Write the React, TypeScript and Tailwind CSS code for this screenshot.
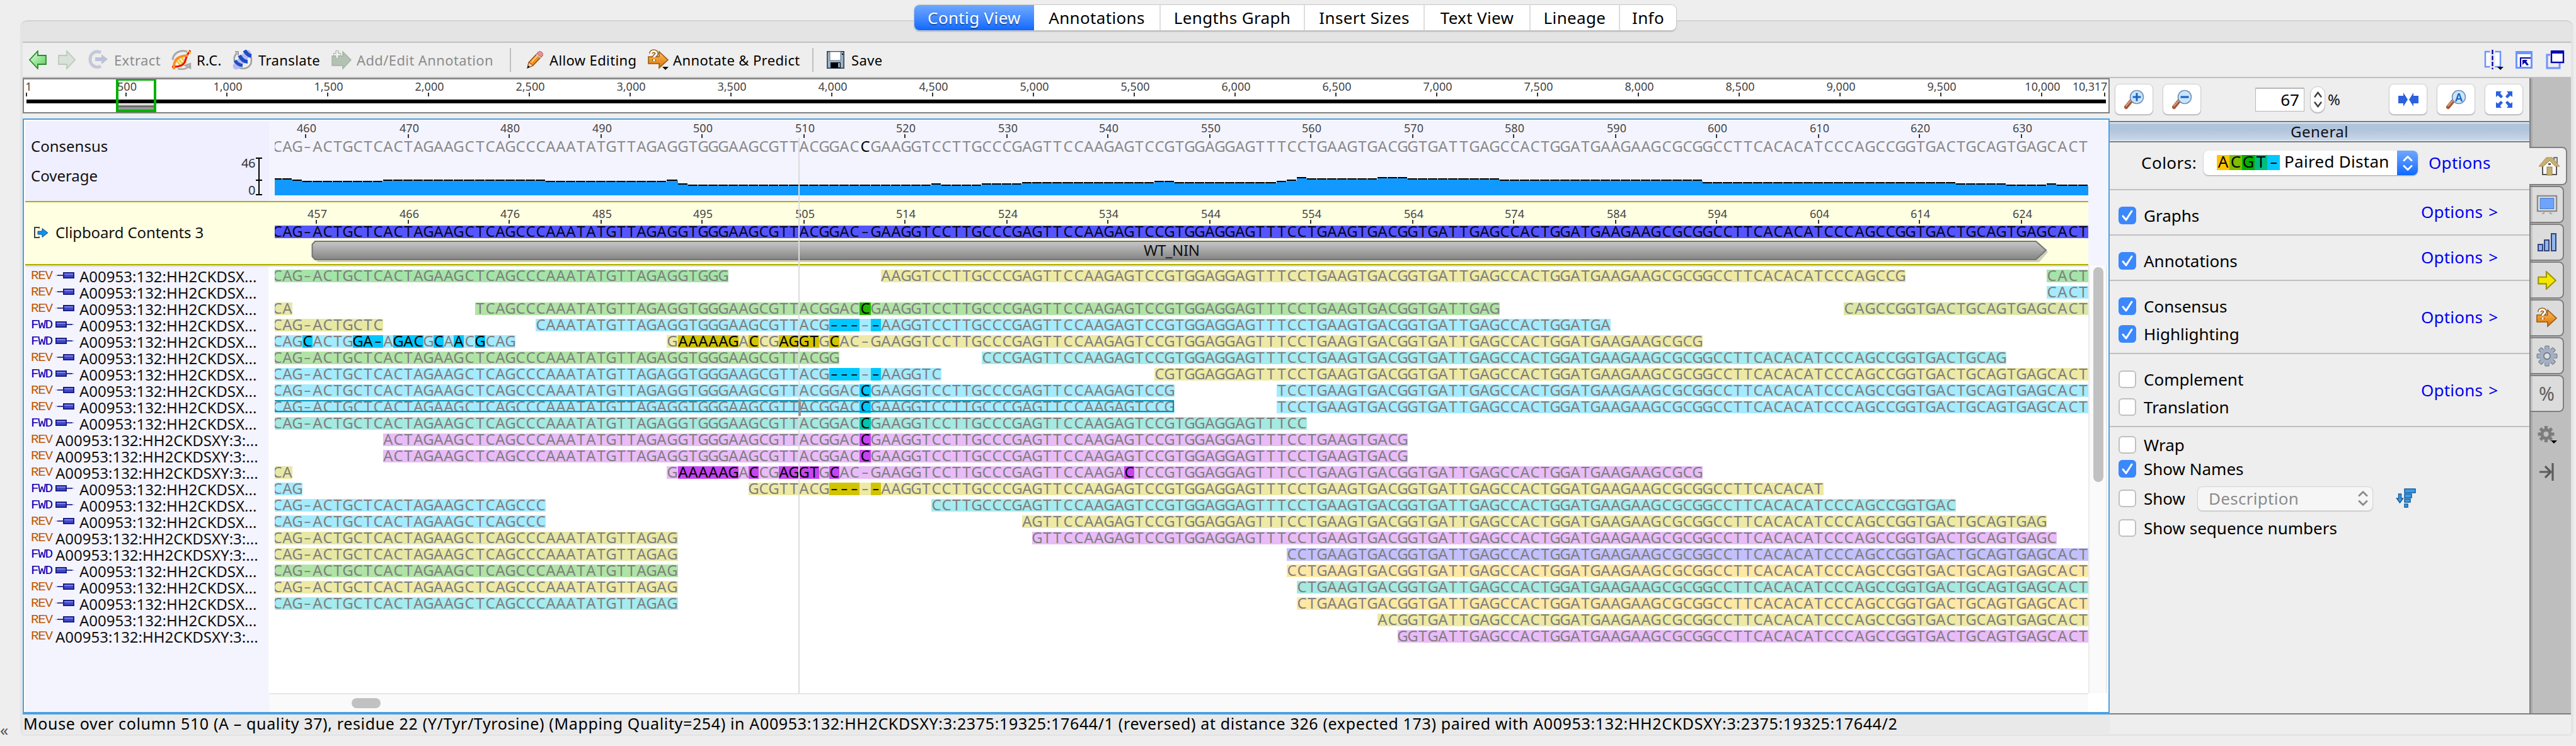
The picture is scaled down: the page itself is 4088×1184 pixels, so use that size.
import React from "react";

const HEAD = "CAG-ACTGCTCACTAGAAGCTCAGCCCAAATATGTTAGAGGTGGGAAGCGTTACGGAC";
const TAIL =
  "GAAGGTCCTTGCCCGAGTTCCAAGAGTCCGTGGAGGAGTTTCCTGAAGTGACGGTGATTGAGCCACTGGATGAAGAAGCGCGGCCTTCACACATCCCAGCCGGTGACTGCAGTGAGCACT";
const CONS = HEAD + "C" + TAIL;
const REFSEQ = HEAD + "-" + TAIL;

/** Left edge of a column, measured from the first (partly hidden) column. */
const left = (i: number) => 2 * Math.floor(8.051 * i);
const wide = (i: number) => left(i + 1) - left(i) === 18;

type Hl = Record<number, string>;
type Seg = { s: number; e: number; bg: string; hlBg?: string; hl?: number[]; patch?: Hl; framed?: boolean };
type Read = { dir: "REV" | "FWD"; paired: boolean; segs: Seg[] };

const GREEN = "bg-[#a5e4a8]";
const LEAF = "bg-[#b0e4a5]";
const LIME = "bg-[#dce7a5]";
const CYAN = "bg-[#a5ebff]";
const AQUA = "bg-[#a5ebef]";
const TEAL = "bg-[#a5e9e0]";
const KHAKI = "bg-[#e8e8a5]";
const YELLOW = "bg-[#eeeaa5]";
const ORANGE = "bg-[#fde8a5]";
const PINK = "bg-[#e9bcf8]";
const LAV = "bg-[#c3c0fe]";

const dashes: Hl = { 55: "-", 56: "-", 57: "-", 58: "-", 59: "-" };
const dashHl = [55, 56, 57, 59];
const spell = (start: number, text: string): Hl =>
  Object.fromEntries(text.split("").map((c, k) => [start + k, c]));
const variant = spell(39, "GAAAAAGACCGAGGTGCAC-");
const variantHl = [40, 41, 42, 43, 44, 45, 47, 50, 51, 52, 53, 55];

const READS: Read[] = [
  { dir: "REV", paired: true, segs: [{ s: 0, e: 45, bg: GREEN }, { s: 60, e: 161, bg: YELLOW }, { s: 175, e: 179, bg: GREEN }] },
  { dir: "REV", paired: true, segs: [{ s: 175, e: 179, bg: CYAN }] },
  { dir: "REV", paired: true, segs: [{ s: 0, e: 2, bg: KHAKI }, { s: 20, e: 121, bg: LEAF, hl: [58], hlBg: "bg-[#22b400]" }, { s: 155, e: 179, bg: LIME }] },
  { dir: "FWD", paired: true, segs: [{ s: 0, e: 11, bg: KHAKI }, { s: 26, e: 132, bg: CYAN, hl: dashHl, patch: dashes, hlBg: "bg-[#00c8ff]" }] },
  {
    dir: "FWD", paired: true,
    segs: [
      { s: 0, e: 24, bg: CYAN, hl: [3, 8, 9, 10, 12, 13, 14, 16, 18, 20], patch: spell(0, "CAGCACTGGA-AGACGCAACGCAG"), hlBg: "bg-[#00c8ff]" },
      { s: 39, e: 141, bg: YELLOW, hl: variantHl, patch: variant, hlBg: "bg-[#d2c400]" },
    ],
  },
  { dir: "REV", paired: true, segs: [{ s: 0, e: 56, bg: LEAF }, { s: 70, e: 171, bg: AQUA }] },
  { dir: "FWD", paired: true, segs: [{ s: 0, e: 66, bg: CYAN, hl: dashHl, patch: dashes, hlBg: "bg-[#00c8ff]" }, { s: 87, e: 179, bg: YELLOW }] },
  { dir: "REV", paired: true, segs: [{ s: 0, e: 89, bg: CYAN, hl: [58], hlBg: "bg-[#00c8ff]" }, { s: 99, e: 179, bg: CYAN }] },
  { dir: "REV", paired: true, segs: [{ s: 0, e: 89, bg: CYAN, hl: [58], hlBg: "bg-[#00c8ff]", framed: true }, { s: 99, e: 179, bg: CYAN }] },
  { dir: "FWD", paired: true, segs: [{ s: 0, e: 102, bg: TEAL, hl: [58], hlBg: "bg-[#00c4ac]" }] },
  { dir: "REV", paired: false, segs: [{ s: 11, e: 112, bg: PINK, hl: [58], hlBg: "bg-[#c644f0]" }] },
  { dir: "REV", paired: false, segs: [{ s: 11, e: 112, bg: PINK, hl: [58], hlBg: "bg-[#c644f0]" }] },
  { dir: "REV", paired: false, segs: [{ s: 0, e: 2, bg: KHAKI }, { s: 39, e: 141, bg: PINK, hl: [...variantHl, 84], patch: { ...variant, 84: "C" }, hlBg: "bg-[#c644f0]" }] },
  { dir: "FWD", paired: true, segs: [{ s: 0, e: 3, bg: CYAN }, { s: 47, e: 153, bg: YELLOW, hl: dashHl, patch: dashes, hlBg: "bg-[#d2c400]" }] },
  { dir: "FWD", paired: true, segs: [{ s: 0, e: 27, bg: CYAN }, { s: 65, e: 166, bg: AQUA }] },
  { dir: "REV", paired: true, segs: [{ s: 0, e: 27, bg: CYAN }, { s: 74, e: 175, bg: YELLOW }] },
  { dir: "REV", paired: false, segs: [{ s: 0, e: 40, bg: KHAKI }, { s: 75, e: 176, bg: PINK }] },
  { dir: "FWD", paired: false, segs: [{ s: 0, e: 40, bg: KHAKI }, { s: 100, e: 179, bg: LAV }] },
  { dir: "FWD", paired: true, segs: [{ s: 0, e: 40, bg: LEAF }, { s: 100, e: 179, bg: ORANGE }] },
  { dir: "REV", paired: true, segs: [{ s: 0, e: 40, bg: YELLOW }, { s: 101, e: 179, bg: TEAL }] },
  { dir: "REV", paired: true, segs: [{ s: 0, e: 40, bg: AQUA }, { s: 101, e: 179, bg: ORANGE }] },
  { dir: "REV", paired: true, segs: [{ s: 109, e: 179, bg: YELLOW }] },
  { dir: "REV", paired: false, segs: [{ s: 111, e: 179, bg: PINK }] },
];

/** Coverage as [end column, bar height]. */
const COVERAGE: [number, number][] = [
  [2, 27], [3, 25], [11, 23], [27, 25], [39, 23], [40, 25], [41, 19], [65, 17], [66, 19], [70, 17], [74, 19],
  [87, 21], [89, 23], [99, 21], [100, 23], [101, 25], [102, 29], [109, 27], [112, 29], [121, 27], [141, 25],
  [166, 21], [171, 19], [175, 17], [176, 19], [179, 17],
];

const TICKS = [648, 808, 954, 1114, 1276, 1436, 1598, 1758, 1920, 2080, 2242, 2402, 2564, 2724, 2886, 3046, 3208];
const CONS_TICKS: [number, string][] = [[485, "460"], ...TICKS.map((x, i): [number, string] => [x, String(470 + 10 * i)])];
const REF_LABELS = ["466", "476", "485", "495", "505", "514", "524", "534", "544", "554", "564", "574", "584", "594", "604", "614", "624"];
const REF_TICKS: [number, string][] = [[502, "457"], ...TICKS.map((x, i): [number, string] => [x, REF_LABELS[i]])];
const MAP_TICKS: [number, string][] = Array.from({ length: 20 }, (_, i) => [200 + 160 * i, ((i + 1) * 500).toLocaleString("en-US")]);

function Ruler({ ticks, origin }: { ticks: [number, string][]; origin: number }) {
  return (
    <div className="flex h-[27px]">
      {ticks.map(([x, label], i) => (
        <div key={label} className="flex w-0 flex-col items-center whitespace-nowrap" style={{ marginLeft: x - (i ? ticks[i - 1][0] : origin) }}>
          <span className="h-[21px] pl-[3px] text-[18px] leading-[22px] text-[#444]">{label}</span>
          <span className="h-[6px] w-[2px] bg-[#333]" />
        </div>
      ))}
    </div>
  );
}

function Base({ i, ch, cls }: { i: number; ch: string; cls: string }) {
  return (
    <span className={`flex h-5 shrink-0 justify-center ${wide(i) ? "w-[18px]" : "w-4"} ${cls}`}>
      {ch === "-" ? <span className="-translate-y-px scale-x-150">-</span> : ch}
    </span>
  );
}

function Strip({ seg }: { seg: Seg }) {
  const cells = [];
  for (let i = seg.s; i < seg.e; i++) {
    const on = seg.hl?.includes(i);
    cells.push(<Base key={i} i={i} ch={seg.patch?.[i] ?? CONS[i]} cls={on ? `${seg.hlBg} text-black` : "text-[#808080]"} />);
  }
  return (
    <div className={`relative flex h-5 ${seg.bg}`}>
      {cells}
      {seg.framed && <div className="absolute -top-px right-px bottom-0.5 left-0 border-2 border-[#0090b8]" />}
    </div>
  );
}

const BASES = "flex text-[24px] leading-[18px]";

function ReadIcon({ dir }: { dir: string }) {
  const rev = dir === "REV";
  return (
    <svg width="30" height="12" viewBox="0 0 30 12">
      <rect x={rev ? 1 : 18} y="5" width="11" height="2" fill="#3a3f9a" />
      <rect x={rev ? 0 : 27} y="5" width="3" height="2" fill="#c8c8e8" />
      <rect x={rev ? 13 : 1} y="2" width="16" height="8" fill="#4048c8" stroke="#1c2088" strokeWidth="2" />
      <rect x={rev ? 14 : 2} y="3" width="14" height="2" fill="#7c84ec" />
    </svg>
  );
}

function ReadRow({ read }: { read: Read }) {
  let at = 0;
  return (
    <div className="flex h-[26px]">
      <div className="flex w-[396px] shrink-0 pl-[9px]">
        <span className={`w-[39px] font-['Liberation_Mono'] text-[21px] leading-[20px] tracking-[-1.3px] ${read.dir === "REV" ? "text-[#c05800]" : "text-[#0000b4]"}`}>
          {read.dir}
        </span>
        {read.paired && (
          <span className="w-[38px] pt-[3px]">
            <ReadIcon dir={read.dir} />
          </span>
        )}
        <span className="text-[24px] leading-[22px] whitespace-nowrap text-[#111]">
          {read.paired ? "A00953:132:HH2CKDSX..." : "A00953:132:HH2CKDSXY:3:..."}
        </span>
      </div>
      <div className="-my-2 w-[2878px] overflow-x-clip py-2">
        <div className={`-ml-1 ${BASES}`}>
          {read.segs.map((seg) => {
            const gap = left(seg.s) - left(at);
            at = seg.e;
            return (
              <div key={seg.s} className="shrink-0" style={{ marginLeft: gap }}>
                <Strip seg={seg} />
              </div>
            );
          })}
        </div>
      </div>
    </div>
  );
}

/* ---------- icons ---------- */

const ARROW = "M2 9H14V1L28 14L14 27V19H2Z";

function QuestionArrow({ caret }: { caret?: boolean }) {
  return (
    <svg width="34" height="34" viewBox="0 0 34 34">
      <defs>
        <linearGradient id="oa" x1="0" y1="0" x2="0" y2="1">
          <stop offset="0" stopColor="#ffc060" />
          <stop offset="1" stopColor="#d87000" />
        </linearGradient>
      </defs>
      <path d="M1 12H18V4L32 17L18 30V23H1Z" fill="url(#oa)" stroke="#9a5a10" strokeWidth="1.6" />
      <path d="M5 7C5 2 14 2 14 7C14 10 10 10 10 13M10 16V19" fill="none" stroke="#9a5a10" strokeWidth="6" />
      <path d="M5 7C5 2 14 2 14 7C14 10 10 10 10 13M10 16V19" fill="none" stroke="#fff" strokeWidth="3" />
      {caret && <path d="M23 28H33L28 33Z" fill="#000" />}
    </svg>
  );
}

function Magnifier({ glyph }: { glyph: "+" | "-" | "A" }) {
  return (
    <svg width="32" height="32" viewBox="0 0 32 32">
      <path d="M3 28L12 17" stroke="#a05838" strokeWidth="6" strokeLinecap="round" />
      <path d="M3 26L11 17" stroke="#dc9c7c" strokeWidth="2" strokeLinecap="round" />
      <circle cx="20" cy="12" r="10.5" fill="#c8e6fc" stroke="#7890b8" strokeWidth="1.6" />
      {glyph === "+" && <path d="M13.5 12H26.5M20 5.500V18.500" stroke="#1c64c0" strokeWidth="3" />}
      {glyph === "-" && <path d="M13.500 12H26.500" stroke="#1c64c0" strokeWidth="3.200" />}
      {glyph === "A" && (
        <text x="20" y="18.500" fontSize="18" textAnchor="middle" fontWeight="600" fill="#1c64c0" fontFamily="Noto Sans">
          A
        </text>
      )}
    </svg>
  );
}

function Gear({ fill, stroke, size }: { fill: string; stroke: string; size: number }) {
  return (
    <svg width={size} height={size} viewBox="-16 -16 32 32">
      {[0, 45, 90, 135].map((a) => (
        <rect key={a} x="-3" y="-15" width="6" height="30" rx="1" fill={fill} stroke={stroke} strokeWidth="1" transform={`rotate(${a})`} />
      ))}
      <circle r="10.500" fill={fill} />
      <circle r="4.800" fill="#dcdcdc" stroke={stroke} strokeWidth="1.500" />
    </svg>
  );
}

function UpDown({ color, w = 16, h = 30, sw = 3 }: { color: string; w?: number; h?: number; sw?: number }) {
  return (
    <svg width={w} height={h} viewBox="0 0 16 30" preserveAspectRatio="none" fill="none" stroke={color} strokeWidth={sw} strokeLinecap="round" strokeLinejoin="round">
      <path d="M2 10L8 3L14 10M2 20L8 27L14 20" />
    </svg>
  );
}

/* ---------- top ---------- */

const TABS: [string, string][] = [
  ["Contig View", "w-[190px]"],
  ["Annotations", "w-[199px]"],
  ["Lengths Graph", "w-[229px]"],
  ["Insert Sizes", "w-[190px]"],
  ["Text View", "w-[168px]"],
  ["Lineage", "w-[142px]"],
  ["Info", "w-[91px]"],
];

function Tabs() {
  return (
    <div className="relative z-10 h-8 pt-2 pl-[1451px]">
      <div className="flex h-10 w-[1209px] rounded-lg bg-white shadow-[0_0_1px_1px_#c8c8c8,0_2px_2px_#aaa]">
        {TABS.map(([t, w], i) => (
          <div
            key={t}
            className={`shrink-0 pt-px text-center text-[26px] leading-[38px] tracking-[0.35px] whitespace-nowrap ${w} ${
              i === 0 ? "rounded-l-lg bg-linear-to-b from-[#6ea8ff] to-[#0a68ff] text-white [text-shadow:0_2px_1px_rgba(0,0,0,0.35)]" : "text-black"
            } ${i > 1 ? "border-l-2 border-[#dedede]" : ""}`}
          >
            {t}
          </div>
        ))}
      </div>
    </div>
  );
}

function Label({ w, children, off }: { w: string; children: React.ReactNode; off?: boolean }) {
  return <span className={`shrink-0 text-[22px] tracking-[0.38px] whitespace-nowrap ${w} ${off ? "text-[#8c8c8c]" : "text-black"}`}>{children}</span>;
}

function Toolbar() {
  return (
    <div className="flex h-[58px] items-center border-y-2 border-[#c0c0c0] bg-[#eeeeee] pl-[9px]">
      <span className="w-[46px] shrink-0">
        <svg width="30" height="30" viewBox="0 0 30 30">
          <defs>
            <linearGradient id="ga" x1="0" y1="0" x2="1" y2="1">
              <stop offset="0" stopColor="#e0ffe0" />
              <stop offset="1" stopColor="#58cc58" />
            </linearGradient>
          </defs>
          <path d="M28 8H15V1L2 15L15 29V22H28Z" fill="url(#ga)" stroke="#2c8c2c" strokeWidth="1.800" />
        </svg>
      </span>
      <span className="w-[49px] shrink-0">
        <svg width="30" height="30" viewBox="0 0 30 30">
          <path d="M2 8H15V1L28 15L15 29V22H2Z" fill="#d8e2d8" stroke="#bccabc" strokeWidth="1.800" />
        </svg>
      </span>
      <span className="w-[41px] shrink-0">
        <svg width="32" height="32" viewBox="0 0 32 32">
          <path d="M20 4.500C12 0 3 6 3 15C3 25 12 30 20 26" fill="none" stroke="#c4c8d8" strokeWidth="5" />
          <path d="M11 12H21V7L31 15L21 23V18H11Z" fill="#bcc2d8" />
        </svg>
      </span>
      <Label w="w-[91px]" off>Extract</Label>
      <span className="w-[40px] shrink-0">
        <svg width="32" height="32" viewBox="0 0 32 32" fill="none">
          <path d="M25 3C14 -1 3 5 2 16" stroke="#a8a8a8" strokeWidth="3" />
          <path d="M10 30C18 32 25 30 29 25M22 25L30 22V29Z" stroke="#a8a8a8" strokeWidth="2.500" />
          <path d="M10 13L20 25M14 10L23 21M8 17L16 27" stroke="#f8c800" strokeWidth="2.500" />
          <path d="M1 27C14 27 21 25 23 14C25 6 27 5 30 1" stroke="#f01010" strokeWidth="3.200" />
          <path d="M4 31C3 15 10 10 26 9" stroke="#fa8c28" strokeWidth="4" />
          <path d="M27 2L31 6" stroke="#f8c800" strokeWidth="2" />
        </svg>
      </span>
      <Label w="w-[57px]">R.C.</Label>
      <span className="w-[41px] shrink-0">
        <svg width="32" height="32" viewBox="0 0 32 32" fill="none">
          <path d="M7 5C-1 13 3 25 12 29C22 32 30 26 30 17C30 12 28 8 26 6" stroke="#a0a0a0" strokeWidth="2.500" />
          <path d="M4 3H9V9" stroke="#a0a0a0" strokeWidth="2" />
          <path d="M6 26L24 6" stroke="#b8b8f0" strokeWidth="11" strokeLinecap="round" />
          <path d="M19 1Q24 9 30 10" stroke="#1c4cc8" strokeWidth="6" />
          <path d="M11 9Q16 19 24 19" stroke="#1c4cc8" strokeWidth="6" />
          <path d="M4 17Q8 24 16 25" stroke="#1c4cc8" strokeWidth="5" />
        </svg>
      </span>
      <Label w="w-[116px]">Translate</Label>
      <span className="w-[40px] shrink-0">
        <svg width="32" height="32" viewBox="0 0 32 32">
          <path d="M1 10H18V3L31 16L18 30V25H1Z" fill="#b4c2b4" stroke="#a4b4a4" strokeWidth="1.500" />
          <path d="M9 1V14M3 7.500H15" stroke="#a8b8a8" strokeWidth="5" />
          <path d="M9 2V13M4 7.500H14" stroke="#f4f4f4" strokeWidth="2.500" />
        </svg>
      </span>
      <Label w="w-[243px]" off>Add/Edit Annotation</Label>
      <span className="h-[38px] w-[2px] shrink-0 bg-[#c0c0c0]" />
      <span className="w-[61px] shrink-0 pl-6">
        <svg width="28" height="30" viewBox="0 0 28 30">
          <path d="M2 28L4 19L19 3L26 8L11 24Z" fill="#f08c20" stroke="#8c4410" strokeWidth="1.200" />
          <path d="M4 19L11 24L2 28Z" fill="#f4d8a8" stroke="#8c4410" />
          <path d="M2 28L3 24L6 26Z" fill="#000" />
          <path d="M8 19L21 5" stroke="#ffc870" strokeWidth="2.500" />
          <path d="M17 5L20 2C23 0 28 4 26 8L24 10Z" fill="#f09098" stroke="#a86068" />
          <path d="M16 6L24 12" stroke="#c0c8d8" strokeWidth="2" />
        </svg>
      </span>
      <Label w="w-[156px]">Allow Editing</Label>
      <span className="w-[40px] shrink-0"><QuestionArrow caret /></span>
      <Label w="w-[221px]">Annotate &amp; Predict</Label>
      <span className="h-[38px] w-[2px] shrink-0 bg-[#c0c0c0]" />
      <span className="w-[60px] shrink-0 pl-[21px]">
        <svg width="28" height="28" viewBox="0 0 28 28">
          <rect x=".8" y=".8" width="26.400" height="26.400" fill="#9cb4c8" stroke="#304050" strokeWidth="1.600" />
          <rect x="5" y="1" width="17" height="14" fill="#fff" stroke="#607488" />
          <rect x="6" y="18" width="16" height="9" fill="#000" />
          <rect x="18" y="19" width="3" height="7" fill="#90a8c0" />
          <rect x="24" y="4" width="2" height="2" fill="#000" />
        </svg>
      </span>
      <Label w="w-[60px]">Save</Label>
      <div className="ml-auto flex shrink-0 items-center pr-[10px]">
        <span className="w-[50px]">
          <svg width="32" height="34" viewBox="0 0 32 34">
            <rect x="2" y="4" width="9" height="24" fill="#fff" stroke="#6c94ff" strokeWidth="2.500" />
            <rect x="16" y="4" width="10" height="24" fill="#fff" stroke="#6c94ff" strokeWidth="2.500" />
            <rect x="9.500" y="0" width="8" height="33" fill="#eee" />
            <path d="M13.500 1V32" stroke="#0000a8" strokeWidth="2.400" strokeDasharray="7 2.500" />
            <path d="M21 28H31L26 33Z" fill="#000" />
          </svg>
        </span>
        <span className="w-[48px]">
          <svg width="28" height="29" viewBox="0 0 28 29">
            <rect x="1.500" y="1.500" width="24" height="25" fill="#fff" stroke="#6c94ff" strokeWidth="3" />
            <rect x="0" y="0" width="27" height="5" fill="#6c94ff" />
            <path d="M8 25V11H24" fill="none" stroke="#0000a8" strokeWidth="2.200" />
            <path d="M11 14H19L17 16.500L21 22L18 23L14.500 18.500L11 22Z" fill="#0000a8" />
          </svg>
        </span>
        <svg width="30" height="32" viewBox="0 0 30 32">
          <path d="M7 8H2V29H22V20" fill="none" stroke="#6c94ff" strokeWidth="3" />
          <rect x="9" y="3" width="19" height="17" fill="#fff" stroke="#0000b4" strokeWidth="2.400" />
          <rect x="8" y="1" width="21" height="5" fill="#0000b4" />
        </svg>
      </div>
    </div>
  );
}

function MiniMap() {
  return (
    <div className="relative h-14 w-[3312px] border-2 border-[#808080] bg-white">
      <div className="flex h-[27px]">
        <div className="flex w-0 flex-col items-center pl-0" style={{ marginLeft: 4 }}>
          <span className="h-[21px] pl-[7px] text-[18px] leading-[22px] text-[#444]">1</span>
          <span className="h-[6px] w-[2px] bg-[#333]" />
        </div>
        <Ruler origin={42} ticks={MAP_TICKS} />
        <div className="flex w-0 flex-col items-end" style={{ marginLeft: 104 }}>
          <span className="h-[21px] text-[18px] leading-[22px] tracking-[-0.2px] whitespace-nowrap text-[#444]">10,317</span>
          <span className="mr-[3px] h-[6px] w-[2px] bg-[#333]" />
        </div>
      </div>
      <div className="mt-[5px] ml-1 h-[6px] w-[3300px] bg-black" />
      <div className="absolute top-0 left-[146px] flex h-[52px] w-[64px] items-end border-4 border-t-2 border-[#00b000]">
        <div className="h-[8px] w-full border-t-2 border-[#a8a8a8] bg-[#999] shadow-[inset_0_2px_0_#666]" />
      </div>
    </div>
  );
}

/* ---------- alignment ---------- */

function Viewer() {
  const bars: number[] = [];
  COVERAGE.forEach(([end, h]) => {
    while (bars.length < end) bars.push(h);
  });
  return (
    <div className="relative h-[946px] w-[3312px] border-2 border-b-4 border-[#4ba0e2] bg-white pt-0.5 pl-0.5">
      {/* consensus and coverage */}
      <div className="flex h-[127px] bg-[#f4f4ff]">
        <div className="flex w-[387px] bg-[#f0efff]">
          <div className="w-[334px] pt-[23px] pl-[9px] text-[24px] text-[#111]">
            <div className="h-[47px] leading-[34px]">Consensus</div>
            <div className="leading-[34px]">Coverage</div>
          </div>
          <div className="flex w-[31px] flex-col items-end pt-[56px] text-[20px] leading-[22px] tracking-[-0.5px] text-[#333]">
            <span className="h-[44px]">46</span>
            <span className="leading-[20px]">0</span>
          </div>
          <svg className="mt-[57px] ml-px" width="10" height="62" viewBox="0 0 10 62">
            <path d="M0 2H10M0 37H10M0 60H10M5 2V60" stroke="#000" strokeWidth="2" />
          </svg>
        </div>
        <div className="ml-[9px] w-[2878px]">
          <Ruler origin={436} ticks={CONS_TICKS} />
          <div className="-mt-1 -mb-[9px] overflow-x-clip py-2">
            <div className={`-ml-1 ${BASES}`}>
              {CONS.split("").map((c, i) => (
                <Base key={i} i={i} ch={c} cls={i === 58 ? "text-black" : "text-[#8a8a8a]"} />
              ))}
            </div>
          </div>
          <div className="flex h-[68px] overflow-hidden">
            <div className="-ml-1 flex items-end">
              {bars.map((h, i) => (
                <div key={i} className={`shrink-0 ${wide(i) ? "w-[18px]" : "w-4"}`}>
                  <div className="mr-px h-0.5 bg-black" />
                  <div className="bg-[#1199ff]" style={{ height: h - 2 }} />
                </div>
              ))}
            </div>
          </div>
        </div>
      </div>
      {/* reference sequence */}
      <div className="flex h-[102px] bg-[#f4f4ff]">
        <div className="flex w-[3274px] border-y-2 border-[#b0b000] bg-[#ffffe2]">
          <div className="flex h-full w-[396px] shrink-0 pt-[31px] pl-[13px]">
            <svg className="mt-[7px] shrink-0" width="26" height="22" viewBox="0 0 26 22">
              <path d="M9 3.500V2H2V18H9V16.500" fill="none" stroke="#444" strokeWidth="2" />
              <path d="M7 8H14V3.500L23 10.500L14 17.500V13H7Z" fill="#1890e8" stroke="#0c5490" strokeWidth="1" />
            </svg>
            <span className="pl-[9px] text-[24px] leading-[34px] tracking-[-0.1px] whitespace-nowrap text-[#111]">Clipboard Contents 3</span>
          </div>
          <div className="w-[2878px] pt-[7px]">
            <Ruler origin={436} ticks={REF_TICKS} />
            <div className="-mt-[5px] -mb-2 overflow-x-clip py-2">
              <div className={`-ml-1 bg-[#5555ff] ${BASES}`}>
                {REFSEQ.split("").map((c, i) => (
                  <Base key={i} i={i} ch={c} cls="text-[#08081e]" />
                ))}
              </div>
            </div>
            <div className="relative mt-1 ml-[58px] h-9 w-[2757px]">
              <svg className="absolute inset-0" width="2757" height="36" viewBox="0 0 2757 36">
                <defs>
                  <linearGradient id="ann" x1="0" y1="0" x2="0" y2="1">
                    <stop offset="0" stopColor="#c8c8c8" />
                    <stop offset="1" stopColor="#848484" />
                  </linearGradient>
                </defs>
                <path d="M8 4H2742L2756 18L2742 34H10L4 26Z" fill="#d0d0b8" />
                <path d="M6 1H2737L2753 15L2737 30H6L1.500 25V6Z" fill="url(#ann)" stroke="#757575" strokeWidth="2" />
              </svg>
              <div className="relative pl-[1321px] text-[24px] leading-[29px] tracking-[-0.4px] text-[#111]">WT_NIN</div>
            </div>
          </div>
        </div>
      </div>
      {/* reads */}
      <div className="flex h-[709px]">
        <div className="w-[3274px]">
          <div className="h-[679px] bg-[linear-gradient(to_right,#f4f4ff_386px,#fff_386px)]">
            <div className="h-[7px] bg-linear-to-b from-[#cfcfcf] to-transparent to-50%" />
            {READS.map((r, i) => (
              <ReadRow key={i} read={r} />
            ))}
          </div>
          <div className="flex h-[30px]">
            <div className="w-[388px] bg-[#f4f4ff]" />
            <div className="flex-1 border-t-2 border-[#e6e6e6] bg-[#fafafa] pt-[6px] pl-[130px]">
              <div className="h-4 w-[46px] rounded-full bg-[#c1c1c1]" />
            </div>
          </div>
        </div>
        <div className="h-[679px] w-[30px] border-x-2 border-[#ebebeb] bg-[#fafafa] pt-[3px] pl-[6px]">
          <div className="h-[341px] w-4 rounded-full bg-[#c1c1c1]" />
        </div>
      </div>
      {/* cursor column */}
      <div className="absolute top-[29px] left-[1229px] h-[881px] w-[2px] bg-[#dcdcdc]" />
      <div className="absolute top-[444px] left-[1229px] h-[26px] w-[4px] bg-[#929292]" />
    </div>
  );
}

/* ---------- options panel ---------- */

function Check({ on, label }: { on?: boolean; label: string }) {
  return (
    <div className="flex h-7 items-center">
      <span className={`flex size-7 items-center justify-center rounded-md ${on ? "bg-[#3b88fd]" : "border-2 border-[#c0c0c0] bg-white"}`}>
        {on && (
          <svg width="20" height="20" viewBox="0 0 20 20">
            <path d="M3 11L8 17L17 3" fill="none" stroke="#fff" strokeWidth="3" strokeLinecap="round" strokeLinejoin="round" />
          </svg>
        )}
      </span>
      <span className="pl-3 text-[26px] leading-7 whitespace-nowrap text-black">{label}</span>
    </div>
  );
}

function Section({ h, top, optTop, checks }: { h: string; top: string; optTop: string; checks: [string, boolean][] }) {
  return (
    <div className={`flex justify-between border-b-2 border-[#c0c0c0] pr-[50px] pl-[14px] ${h}`}>
      <div className={`flex flex-col gap-4 ${top}`}>
        {checks.map(([l, on]) => (
          <Check key={l} label={l} on={on} />
        ))}
      </div>
      <div className={`flex h-7 gap-[9px] text-[26px] leading-7 text-[#0000f0] ${optTop}`}>
        <span className="tracking-[0.2px]">Options</span>
        <span>&gt;</span>
      </div>
    </div>
  );
}

function IconButton({ children }: { children: React.ReactNode }) {
  return (
    <div className="flex h-[49px] w-[61px] shrink-0 items-center justify-center rounded-lg border border-[#cfcfcf] bg-white shadow-[0_1px_1px_#b0b0b0]">
      {children}
    </div>
  );
}

const SWATCHES: [string, string][] = [
  ["A", "bg-[#ffc400]"],
  ["C", "bg-[#80bc00]"],
  ["G", "bg-[#00b000]"],
  ["T", "bg-[#00bc80]"],
  ["-", "bg-[#00c8ff]"],
];

function OptionsPanel() {
  return (
    <div className="h-[1008px] w-[666px] shrink-0 bg-[#eeeeee]">
      <div className="flex h-[68px] pt-[9px] pl-2">
        <IconButton><Magnifier glyph="+" /></IconButton>
        <span className="w-[15px]" />
        <IconButton><Magnifier glyph="-" /></IconButton>
        <div className="mt-[6px] ml-[86px] h-[38px] w-[78px] border border-t-2 border-[#b8b8b8] bg-white pr-[7px] text-right text-[26px] leading-[35px]">67</div>
        <div className="mt-1 ml-[9px] flex h-[42px] w-6 items-center justify-center rounded-xl border border-[#c8c8c8] bg-white shadow-[0_1px_1px_#b0b0b0]">
          <UpDown color="#404040" w={13} h={28} />
        </div>
        <span className="w-[101px] pl-[4px] text-[24px] leading-[50px] text-[#111]">%</span>
        <IconButton>
          <svg width="32" height="24" viewBox="0 0 32 24" fill="#2c60dc">
            <path d="M0 6H8V1L15 12L8 23V18H0ZM32 6H24V1L17 12L24 23V18H32Z" />
          </svg>
        </IconButton>
        <span className="w-[15px]" />
        <IconButton><Magnifier glyph="A" /></IconButton>
        <span className="w-[15px]" />
        <IconButton>
          <svg width="28" height="28" viewBox="0 0 28 28" fill="#2c60dc">
            {[0, 90, 180, 270].map((a) => (
              <path key={a} d="M1 1H10L7.500 4L12 9L9 12L4 7.500L1 10Z" transform={`rotate(${a} 14 14)`} />
            ))}
          </svg>
        </IconButton>
      </div>
      <div className="h-[34px] border-t-2 border-b-2 border-t-[#6c7c88] border-b-[#808080] bg-linear-to-b from-[#b0c4dc] from-40% to-[#ccd8ea] text-center text-[24px] leading-[29px] tracking-[0.5px] text-[#111] shadow-[inset_0_2px_0_#e4ecf4,inset_0_-2px_0_#dde5f0]">
        General
      </div>
      <div className="flex h-[76px] border-b-2 border-[#c0c0c0] pt-[13px] pl-[50px] text-[26px] leading-[38px] text-black">
        <span className="w-[99px] tracking-[0.5px]">Colors:</span>
        <div className="flex h-[39px] w-[340px] rounded-lg bg-white pl-[21px] shadow-[0_1px_2px_#999]">
          <div className="mt-[7px] flex h-6 leading-[21px]">
            {SWATCHES.map(([c, bg]) => (
              <span key={c} className={`flex w-5 justify-center ${bg}`}>
                {c === "-" ? <span className="scale-x-150">-</span> : c}
              </span>
            ))}
          </div>
          <span className="ml-[7px] w-[168px] overflow-hidden leading-[35px] tracking-[0.3px] whitespace-nowrap">Paired Distan</span>
          <div className="ml-auto flex w-[33px] items-center justify-center rounded-r-lg bg-linear-to-b from-[#6ea8ff] to-[#0a68ff]">
            <UpDown color="#fff" h={26} />
          </div>
        </div>
        <span className="pl-[17px] tracking-[0.3px] text-[#0000f0]">Options</span>
      </div>
      <Section h="h-[72px]" top="pt-[26px]" optTop="mt-[20px]" checks={[["Graphs", true]]} />
      <Section h="h-[72px]" top="pt-[26px]" optTop="mt-[20px]" checks={[["Annotations", true]]} />
      <Section h="h-[116px]" top="pt-[26px]" optTop="mt-[43px]" checks={[["Consensus", true], ["Highlighting", true]]} />
      <Section h="h-[116px]" top="pt-[26px]" optTop="mt-[43px]" checks={[["Complement", false], ["Translation", false]]} />
      <div className="flex flex-col pt-[14px] pl-[14px]">
        <Check label="Wrap" />
        <div className="h-[10px]" />
        <Check label="Show Names" on />
        <div className="flex h-[66px] items-center">
          <Check label="Show" />
          <div className="ml-[19px] flex h-[39px] w-[279px] items-center rounded-lg border border-[#d4d4d4] bg-[#f6f6f6] pr-[7px] pl-[17px] text-[26px] leading-[34px] tracking-[0.3px] text-[#8c8c8c] shadow-[0_1px_1px_#c8c8c8]">
            <span className="flex-1">Description</span>
            <UpDown color="#8c8c8c" h={26} />
          </div>
          <svg className="ml-[36px]" width="32" height="32" viewBox="0 0 32 32">
            <g fill="#3c9cec" stroke="#145c9c" strokeWidth="1.500">
              <rect x="14" y="1" width="17" height="6" />
              <rect x="14" y="9" width="11" height="6" />
              <rect x="14" y="17" width="9" height="5" />
              <rect x="14" y="25" width="5" height="5" />
              <path d="M4.500 9H8.500V16H11.500L6.500 23L1.500 16H4.500Z" />
            </g>
          </svg>
        </div>
        <Check label="Show sequence numbers" />
      </div>
    </div>
  );
}

function SideTab({ children }: { children: React.ReactNode }) {
  return (
    <div className="mb-px flex h-[59px] w-[55px] items-center justify-center rounded-r-lg border-2 border-[#808080] bg-[#dcdcdc] shadow-[inset_3px_0_0_#c4c4c4]">
      {children}
    </div>
  );
}

function SideStrip() {
  return (
    <div className="h-[1008px] w-[66px] shrink-0 border-l-2 border-[#808080] bg-[#bebebe] shadow-[inset_3px_0_0_#aaa]">
      <div className="-ml-0.5 pt-[109px]">
        <div className="mb-px flex h-[61px] w-[60px] items-center rounded-r-lg border-2 border-l-0 border-[#808080] bg-[#eeeeee] pl-[15px]">
          <svg width="34" height="32" viewBox="0 0 34 32">
            <path d="M6 16V29H28V16L17 6Z" fill="#fff" stroke="#555" strokeWidth="2" />
            <rect x="24" y="2" width="5" height="10" fill="#ddd" stroke="#555" strokeWidth="1.500" />
            <path d="M0 16L12 2H21L33 16H26L17 7L7 16Z" fill="#c8b074" stroke="#a89050" strokeWidth="1" />
            <rect x="13" y="17" width="8" height="13" fill="#c8b074" stroke="#987c38" strokeWidth="1" />
            <rect x="15" y="11" width="4" height="3" fill="#555" />
          </svg>
        </div>
        <SideTab>
          <svg width="34" height="32" viewBox="0 0 34 32">
            <rect x="2" y="2" width="30" height="24" fill="#eee" stroke="#8c8c8c" strokeWidth="2.500" />
            <rect x="6" y="5.500" width="22" height="17" fill="#6ca4ff" stroke="#4c74b8" />
            <path d="M11 28H14L12 31H8ZM20 28H23L26 31H22Z" fill="#aaa" />
          </svg>
        </SideTab>
        <SideTab>
          <svg width="34" height="32" viewBox="0 0 34 32" fill="#90b8ec" stroke="#34447c" strokeWidth="2">
            <rect x="3" y="19" width="7" height="10" />
            <rect x="13" y="12" width="7" height="17" />
            <rect x="24" y="2" width="7" height="27" />
          </svg>
        </SideTab>
        <SideTab>
          <svg width="34" height="30" viewBox="0 0 32 28">
            <path d={ARROW} fill="#f4e800" stroke="#a09400" strokeWidth="2" transform="translate(1 0)" />
          </svg>
        </SideTab>
        <SideTab><QuestionArrow /></SideTab>
        <SideTab><Gear size={34} fill="#a4b0c4" stroke="#6c7484" /></SideTab>
        <SideTab><span className="text-[30px] leading-none text-[#606060]">%</span></SideTab>
        <div className="flex pt-[20px] pl-[11px]">
          <svg width="34" height="34" viewBox="0 0 34 34">
            <g transform="translate(15.500 14) scale(.86)" fill="#7c7c7c">
              {[0, 45, 90, 135].map((a) => (
                <rect key={a} x="-3" y="-15" width="6" height="30" transform={`rotate(${a})`} />
              ))}
              <circle r="10.500" />
              <circle r="4.800" fill="#bebebe" />
            </g>
            <path d="M23 24H33L28 29Z" fill="#000" />
          </svg>
        </div>
        <svg className="mt-[25px] ml-4" width="24" height="30" viewBox="0 0 24 30" fill="none" stroke="#5c5c5c" strokeWidth="3.200">
          <path d="M0 15H17M9 6L18 15L9 24M21 1V29" />
        </svg>
      </div>
    </div>
  );
}

export default function App() {
  return (
    <div className="relative flex h-[1184px] w-[4088px] flex-col overflow-hidden bg-[#eeeeee] font-['Noto_Sans',sans-serif]">
      <Tabs />
      <div className="ml-8 h-[1136px] w-[4052px] rounded-t-xl rounded-b-lg border-t-2 border-[#d2d2d2] bg-[#e4e4e4] px-1 pt-8">
        <div className="h-[1099px] bg-[#eeeeee]">
          <Toolbar />
          <div className="flex">
            <div className="w-[3312px] shrink-0">
              <MiniMap />
              <div className="h-2" />
              <Viewer />
            </div>
            <div className="flex border-b-2 border-[#808080]">
              <OptionsPanel />
              <SideStrip />
            </div>
          </div>
          <div className="-mt-px w-[3312px] bg-[#e9e9e9] pl-px text-[25px] leading-[31px] tracking-[0.64px] whitespace-nowrap text-black">
            Mouse over column 510 (A – quality 37), residue 22 (Y/Tyr/Tyrosine) (Mapping Quality=254) in A00953:132:HH2CKDSXY:3:2375:19325:17644/1
            (reversed) at distance 326 (expected 173) paired with A00953:132:HH2CKDSXY:3:2375:19325:17644/2
          </div>
        </div>
      </div>
      <div className="absolute bottom-[10px] left-0 text-[26px] leading-8 text-[#555]">«</div>
    </div>
  );
}
